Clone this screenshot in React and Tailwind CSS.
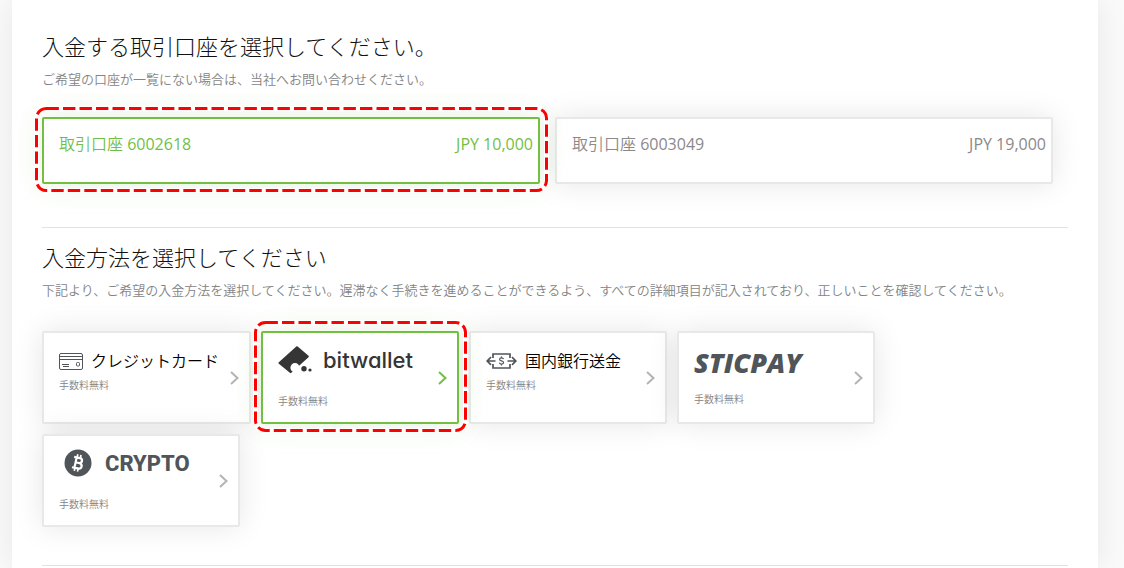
import { useState } from 'react';

const ACCOUNTS = [
  { id: '6002618', balance: 'JPY 10,000' },
  { id: '6003049', balance: 'JPY 19,000' },
];

function CardIcon() {
  return (
    <svg width="24" height="17" viewBox="0 0 24 17" fill="none" stroke="#50555a" aria-hidden="true">
      <rect x="0.5" y="0.5" width="23" height="16" rx="1.5" />
      <path d="M1 3.5h22M1 6.5h22M3 11.5h7M4 13.5h6" />
      <rect x="17.5" y="9.5" width="3" height="3.5" rx="1" />
    </svg>
  );
}

function BankIcon() {
  return (
    <svg width="31" height="16" viewBox="0 0 31 16" fill="none" stroke="#50555a" strokeWidth="1.7" aria-hidden="true">
      <path d="M7 5V1h17v4M7 11v4h17v-4" />
      <path d="M9.500 8H1.200M5 4.200L1.200 8 5 11.800M21.500 8h8.300M26 4.200L29.800 8 26 11.800" />
      <path
        strokeWidth="1.2"
        d="M17.500 6.200c-.2-.8-.9-1.300-2-1.300s-1.900.6-1.900 1.500c0 2 4 1 4 3.200 0 .9-.8 1.500-2 1.500s-2-.5-2.200-1.400M15.500 3.600v1.300M15.500 11.100v1.300"
      />
    </svg>
  );
}

function BitwalletIcon() {
  return (
    <svg width="34" height="28" viewBox="0 0 34 28" fill="#353535" aria-hidden="true">
      <path d="M18.300.6a1 1 0 0 1 1.400 0L30.500 9.800a1 1 0 0 1 0 1.400L13.300 26.800a1 1 0 0 1-1.400 0L.8 17.700a1 1 0 0 1 0-1.400z" />
      <circle cx="17" cy="21.700" r="4.600" fill="#fff" />
      <circle cx="26" cy="22.800" r="2.700" />
      <circle cx="32" cy="24" r="1.600" />
    </svg>
  );
}

function BitcoinIcon() {
  return (
    <svg width="28" height="28" viewBox="0 0 28 28" aria-hidden="true">
      <circle cx="14" cy="14" r="13.500" fill="#50555a" />
      <g transform="rotate(12 14 14)" fill="none" stroke="#fff" strokeWidth="2.200">
        <path d="M9 8.800h5.800c3.600 0 3.600 5 0 5H11.500M14.800 13.800c4.600 0 4.600 5.600 0 5.600H9M11.500 8.800v10.600" />
        <path strokeWidth="1.700" d="M12 5.500v3M15.300 5.500v3M12 19.500v3M15.300 19.500v3" />
      </g>
    </svg>
  );
}

function Chevron() {
  return (
    <svg className="shrink-0" width="9" height="14" viewBox="0 0 9 14" fill="none" stroke="currentColor" strokeWidth="2" aria-hidden="true">
      <path d="M1 1l6.500 6L1 13" />
    </svg>
  );
}

const METHODS = [
  {
    id: 'card',
    title: (
      <span className="flex h-7 items-center gap-2 whitespace-nowrap text-base font-[350]">
        <CardIcon />
        クレジットカード
      </span>
    ),
  },
  {
    id: 'bitwallet',
    title: (
      <span className="mb-[18px] flex h-[26px] items-center gap-[11px] font-['Inter'] text-[22px] font-medium text-[#353535] [font-feature-settings:'cv11']">
        <BitwalletIcon />
        bitwallet
      </span>
    ),
  },
  {
    id: 'bank',
    title: (
      <span className="flex h-7 items-center gap-2 whitespace-nowrap text-base font-[350]">
        <BankIcon />
        国内銀行送金
      </span>
    ),
  },
  {
    id: 'sticpay',
    title: (
      <span className="mb-[10px] flex h-8 items-center text-[27px] font-extrabold italic text-[#50555a]">
        STICPAY
      </span>
    ),
  },
  {
    id: 'crypto',
    title: (
      <span className="mb-[18px] flex h-[26px] items-center gap-[13px] pl-[5px] font-['Roboto'] text-[22px] font-extrabold text-[#50555a]">
        <BitcoinIcon />
        CRYPTO
      </span>
    ),
  },
];

// dashed red frame that hangs slightly outside of the card
function Highlight() {
  return (
    <span className="pointer-events-none absolute -inset-x-2 -top-[11px] -bottom-2">
      <svg className="h-full w-full overflow-visible" fill="none" aria-hidden="true">
        <rect x="0.5" y="0.5" width="100%" height="100%" rx="10" stroke="#fff" strokeWidth="5" />
        <rect x="0.5" y="0.5" width="100%" height="100%" rx="10" stroke="#f00" strokeWidth="3" strokeDasharray="12.400 4.100" />
      </svg>
    </span>
  );
}

function OptionCard({ selected, onClick, className, children }) {
  return (
    <button
      type="button"
      aria-pressed={selected}
      onClick={onClick}
      className={`relative flex rounded-xs border-2 bg-white pl-[15px] text-left ${
        selected
          ? 'z-10 border-[#72bf44] shadow-[0_0_30px_rgba(114,191,68,0.2)]'
          : 'border-[#e8e8e8] shadow-[0_0_30px_rgba(0,0,0,0.1)]'
      } ${className}`}
    >
      {children}
      {selected && <Highlight />}
    </button>
  );
}

function SectionHeader({ title, text }) {
  return (
    <>
      <h2 className="text-[22px] leading-8 font-light text-[#111]">{title}</h2>
      <p className="mt-1.5 text-[13px] leading-[22px] font-[350] text-[#848484]">{text}</p>
    </>
  );
}

export default function App() {
  const [account, setAccount] = useState('6002618');
  const [method, setMethod] = useState('bitwallet');

  return (
    <div className="min-h-screen overflow-hidden bg-[#fafafa] pr-[26px] pl-3 font-['Open_Sans','Noto_Sans_CJK_JP',sans-serif]">
      <main className="min-h-screen bg-white px-[30px] pt-[30px] shadow-[0_0_30px_rgba(0,0,0,0.08)]">
        <section className="border-b border-[#e2e2e2] pb-[43px]">
          <SectionHeader
            title="入金する取引口座を選択してください。"
            text="ご希望の口座が一覧にない場合は、当社へお問い合わせください。"
          />
          <div className="mt-[27px] grid grid-cols-2 gap-[15px] pr-[15px]">
            {ACCOUNTS.map((a) => (
              <OptionCard
                key={a.id}
                selected={account === a.id}
                onClick={() => setAccount(a.id)}
                className={`justify-between pt-[13px] pr-[5px] pb-[26px] ${account === a.id ? 'text-[#72bf44]' : 'text-[#8a8a8a]'}`}
              >
                <span>
                  <span className="font-[350]">取引口座</span> {a.id}
                </span>
                <span>{a.balance}</span>
              </OptionCard>
            ))}
          </div>
        </section>

        <section className="border-b border-[#e2e2e2] pt-[13px] pb-[38px]">
          <SectionHeader
            title="入金方法を選択してください"
            text="下記より、ご希望の入金方法を選択してください。遅滞なく手続きを進めることができるよう、すべての詳細項目が記入されており、正しいことを確認してください。"
          />
          <div className="mt-[30px] flex flex-wrap gap-[10px]">
            {METHODS.map((m) => (
              <OptionCard
                key={m.id}
                selected={method === m.id}
                onClick={() => setMethod(m.id)}
                className="h-[93px] min-w-[198px] justify-between gap-[11px] pr-[10px]"
              >
                <span className="self-start pt-[14px]">
                  {m.title}
                  <span className="block text-[10px] leading-5 font-[350] text-[#848484]">手数料無料</span>
                </span>
                <span className={`self-center ${method === m.id ? 'text-[#72bf44]' : 'text-[#b4b4b4]'}`}>
                  <Chevron />
                </span>
              </OptionCard>
            ))}
          </div>
        </section>
      </main>
    </div>
  );
}
